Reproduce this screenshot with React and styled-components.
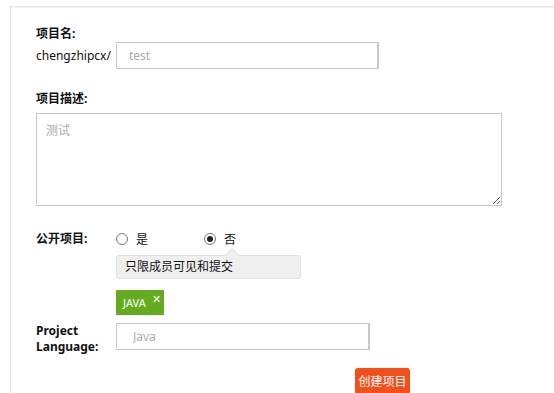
import React from 'react'
import styled, { createGlobalStyle } from 'styled-components'

const GlobalStyle = createGlobalStyle`
  html, body {
    margin: 0;
    padding: 0;
    background: #fff;
  }
  body {
    font-family: "Noto Sans", "Noto Sans CJK SC", sans-serif;
    font-size: 12px;
    color: #222;
  }
`

const Page = styled.div`
  padding-top: 6px;
  padding-left: 10px;
  height: 387px;
  overflow: hidden;
`

const Panel = styled.div`
  border-top: 1px solid #e6e6e6;
  border-left: 1px solid #dcdcdc;
  box-shadow: inset 0 1px 0 #f6f6f6;
  padding: 19px 0 0 25px;
  height: 100%;
  box-sizing: border-box;
`

const Title = styled.div`
  font-weight: bold;
  font-size: 12px;
  line-height: 16px;
  margin-top: ${props => props.mt || '0px'};
  color: #111;
`

const Row = styled.div`
  display: flex;
  align-items: ${props => props.align || 'center'};
  margin-top: ${props => props.mt || '0px'};
`

const Label = styled.div`
  width: 80px;
  flex-shrink: 0;
  line-height: 16px;
  font-weight: ${props => (props.bold ? 'bold' : 'normal')};
  color: #111;
`

const Input = styled.input`
  box-sizing: border-box;
  width: ${props => props.width};
  height: ${props => props.height || '27px'};
  border: 1px solid #c8c8c8;
  border-right-width: 2px;
  padding: 0 0 0 ${props => props.pl || '12px'};
  font-family: inherit;
  font-size: 12px;
  outline: none;
  &::placeholder {
    color: #aaa;
  }
`

const TextArea = styled.textarea`
  display: block;
  box-sizing: border-box;
  width: 466px;
  height: 93px;
  margin-top: 6px;
  border: 1px solid #c8c8c8;
  padding: 7px 9px;
  font-family: inherit;
  font-size: 12px;
  resize: vertical;
  outline: none;
  &::placeholder {
    color: #aaa;
  }
`

const Radios = styled.div`
  display: flex;
  align-items: center;
`

const RadioItem = styled.label`
  display: flex;
  align-items: center;
  gap: 8px;
  width: ${props => props.width || 'auto'};
  color: #111;
`

const RadioDot = styled.span`
  position: relative;
  display: inline-block;
  width: 10px;
  height: 10px;
  border: 1px solid #777;
  border-radius: 50%;
  background: #fff;
  &::after {
    content: '';
    display: ${props => (props.checked ? 'block' : 'none')};
    position: absolute;
    left: 2px;
    top: 2px;
    width: 6px;
    height: 6px;
    border-radius: 50%;
    background: #222;
  }
`

const Tip = styled.div`
  position: relative;
  box-sizing: border-box;
  width: 185px;
  height: 24px;
  margin: 7px 0 0 80px;
  padding-left: 8px;
  line-height: 22px;
  background: #efefef;
  border: 1px solid #e0e0e0;
  border-radius: 3px;
  color: #111;
  &::before {
    content: '';
    position: absolute;
    left: 110px;
    top: -6px;
    width: 9px;
    height: 9px;
    background: #efefef;
    border-left: 1px solid #e0e0e0;
    border-top: 1px solid #e0e0e0;
    transform: rotate(45deg);
  }
`

const Tag = styled.span`
  display: inline-flex;
  align-items: center;
  box-sizing: border-box;
  height: 25px;
  width: 48px;
  margin: 11px 0 0 80px;
  padding-left: 7px;
  background: #65ab1f;
  color: #fff;
  font-size: 11px;
`

const TagClose = styled.span`
  font-size: 11px;
  margin-left: 6px;
  margin-top: -8px;
`

const Footer = styled.div`
  display: flex;
  margin-top: 13px;
  padding-left: 319px;
`

const Button = styled.button`
  width: 55px;
  height: 26px;
  border: none;
  border-radius: 3px;
  background: #f24f1b;
  color: #fff;
  font-family: inherit;
  font-size: 12px;
  padding: 0;
`

export default function App() {
  return (
    <Page>
      <GlobalStyle />
      <Panel>
        <Title>项目名:</Title>
        <Row>
          <Label>chengzhipcx/</Label>
          <Input width="263px" placeholder="test" />
        </Row>
        <Title mt="22px">项目描述:</Title>
        <TextArea placeholder="测试" />
        <Row mt="24px">
          <Label bold>公开项目:</Label>
          <Radios>
            <RadioItem width="88px">
              <RadioDot />是
            </RadioItem>
            <RadioItem>
              <RadioDot checked />否
            </RadioItem>
          </Radios>
        </Row>
        <Tip>只限成员可见和提交</Tip>
        <Tag>
          JAVA<TagClose>✕</TagClose>
        </Tag>
        <Row align="flex-start" mt="8px">
          <Label bold>
            Project
            <br />
            Language:
          </Label>
          <Input width="254px" height="27px" pl="16px" placeholder="Java" />
        </Row>
        <Footer>
          <Button>创建项目</Button>
        </Footer>
      </Panel>
    </Page>
  )
}
